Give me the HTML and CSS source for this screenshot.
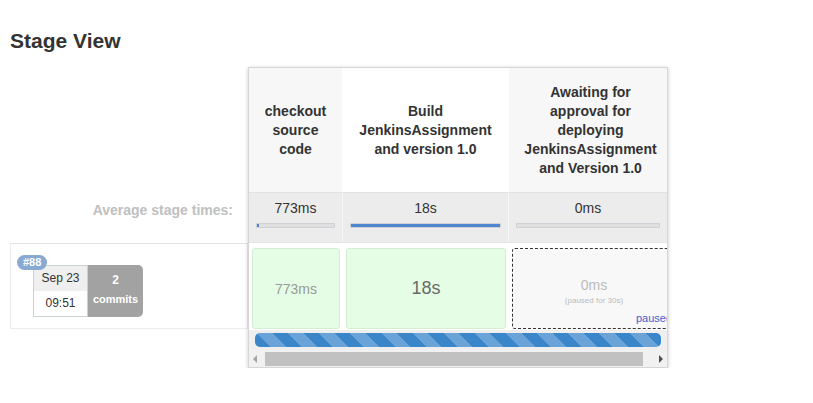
FILE: index.html
```html
<!DOCTYPE html>
<html>
<head>
<meta charset="utf-8">
<link rel="stylesheet" href="styles.css">
</head>
<body>
<div class="page">
  <h2 class="title">Stage View</h2>
  <div class="stage">
    <div class="left">
      <div class="left-head"></div>
      <div class="left-avg">Average stage times:</div>
      <div class="left-build">
        <div class="build-info">
          <span class="badge">#88</span>
          <div class="date">
            <div class="date-day">Sep 23</div>
            <div class="date-time">09:51</div>
          </div>
          <div class="commits">
            <div class="commits-n">2</div>
            <div>commits</div>
          </div>
        </div>
      </div>
    </div>
    <div class="box">
      <div class="scroll">
        <div class="grid">
          <div class="hd alt c1"><span>checkout source code</span></div>
          <div class="hd c2"><span>Build JenkinsAssignment and version 1.0</span></div>
          <div class="hd alt c3"><span>Awaiting for approval for deploying JenkinsAssignment and Version 1.0</span></div>

          <div class="avg c1">
            <div class="avg-t">773ms</div>
            <div class="track"><div class="fill" style="width:3%"></div></div>
          </div>
          <div class="avg c2">
            <div class="avg-t">18s</div>
            <div class="track"><div class="fill" style="width:100%"></div></div>
          </div>
          <div class="avg c3">
            <div class="avg-t">0ms</div>
            <div class="track"><div class="fill" style="width:0%"></div></div>
          </div>

          <div class="cell c1"><div class="ok small">773ms</div></div>
          <div class="cell c2"><div class="ok big">18s</div></div>
          <div class="cell c3">
            <div class="paused">
              <div class="p-time">0ms</div>
              <div class="p-note">(paused for 30s)</div>
              <a class="p-link">paused</a>
            </div>
          </div>
        </div>
        <div class="prog-row"><div class="prog"></div></div>
      </div>
      <div class="sbar">
        <span class="arr arr-l"></span>
        <div class="thumb"></div>
        <span class="arr arr-r"></span>
      </div>
    </div>
  </div>
</div>
</body>
</html>
```
FILE: styles.css
```css
* { box-sizing: border-box; }
body {
  margin: 0;
  font-family: "Liberation Sans", Arial, sans-serif;
  color: #333;
  background: #fff;
}
.page { padding: 29px 10px 0 10px; }
.title {
  margin: 0;
  font-size: 21px;
  line-height: 24px;
  font-weight: bold;
  color: #333;
}
.stage {
  display: flex;
  margin-top: 14px;
}
.left { width: 238px; flex: none; }
.left-head { height: 125px; }
.left-avg {
  height: 50px;
  text-align: right;
  padding: 10px 15px 0 0;
  font-size: 14px;
  font-weight: bold;
  color: #c0c0c0;
}
.left-build {
  height: 86px;
  margin-top: 1px;
  border: 1px solid #ececec;
  border-top-color: #e2e2e2;
}
.build-info {
  position: relative;
  display: flex;
  margin: 21px 0 0 22px;
}
.badge {
  position: absolute;
  left: -16px;
  top: -10px;
  background: #88a9d2;
  color: #fff;
  font-size: 11px;
  font-weight: bold;
  line-height: 15px;
  padding: 0 6px;
  border-radius: 8px;
  z-index: 1;
}
.date {
  width: 55px;
  height: 52px;
  border: 1px solid #c9d3c9;
  font-size: 12px;
  text-align: center;
  color: #333;
}
.date-day { background: #efefef; height: 25px; line-height: 25px; }
.date-time { height: 25px; line-height: 25px; background: #fff; }
.commits {
  width: 55px;
  height: 52px;
  background: #a2a2a2;
  border-radius: 0 5px 5px 0;
  color: #fff;
  font-size: 11px;
  font-weight: bold;
  text-align: center;
  padding-top: 6px;
  line-height: 19px;
}
.commits-n { font-size: 12px; }

.box {
  width: 420px;
  flex: none;
  border: 1px solid #d6d6d6;
  box-shadow: 0 1px 4px rgba(0,0,0,0.22);
  background: #fff;
}
.scroll { overflow: hidden; width: 418px; }
.grid {
  display: grid;
  grid-template-columns: 94px 166px 172px;
  grid-template-rows: 124px 50px 88px;
  width: 432px;
}
.hd {
  display: flex;
  align-items: center;
  justify-content: center;
  text-align: center;
  font-size: 14px;
  font-weight: bold;
  line-height: 19px;
  color: #333;
  padding: 0 6px;
  background: #fff;
  border-right: 1px solid #fdfdfd;
}
.hd.alt { background: #f7f7f7; }
.hd.c3 { padding: 0 14px 0 6px; }
.hd.c1 span { display: block; width: 70px; }
.hd.c3 span { display: block; width: 140px; }
.avg {
  background: #ececec;
  border-top: 1px solid #e2e2e2;
  border-right: 1px solid #f6f6f6;
  padding: 7px 7px 0 7px;
  text-align: center;
}
.avg.c3 { padding-right: 20px; }
.avg-t { font-size: 14px; line-height: 16px; color: #333; }
.track {
  margin-top: 7px;
  height: 5px;
  background: #e0e0e0;
  border: 1px solid #cfcfd6;
  border-radius: 1px;
}
.fill { height: 100%; background: #4f86d0; min-width: 2px; }
.avg.c3 .fill { min-width: 0; }
.cell {
  padding: 5px 3px 2px 3px;
  border-top: 1px solid #e4e4e4;
}
.ok {
  height: 81px;
  background: #e5fde5;
  border: 1px solid #d3ecd3;
  border-radius: 3px;
  display: flex;
  align-items: center;
  justify-content: center;
}
.ok.small { font-size: 14px; color: #9a9a9a; }
.ok.big { font-size: 18px; color: #6a6a6a; }
.paused {
  position: relative;
  height: 81px;
  background: #f8f8f8;
  border: 1px dashed #333;
  border-radius: 3px;
  text-align: center;
  padding-top: 28px;
  width: 164px;
}
.p-time { font-size: 14px; color: #bbb; line-height: 16px; }
.p-note { font-size: 8px; color: #bbb; margin-top: 3px; }
.p-link {
  position: absolute;
  left: 123px;
  bottom: 4px;
  font-size: 11px;
  color: #3e62d0;
}
.prog-row {
  background: #efefef;
  height: 20px;
  padding: 3px 0 0 6px;
  display: flex;
}
.prog {
  width: 406px;
  height: 14px;
  border-radius: 5px;
  background-color: #3b86c9;
  background-image: repeating-linear-gradient(45deg,
    #3b86c9 0, #3b86c9 11px, #6aa3d8 11px, #6aa3d8 22px);
}
.sbar {
  position: relative;
  height: 17px;
  background: #f1f1f1;
  display: flex;
  align-items: center;
  padding: 0 0 0 16px;
}
.thumb {
  width: 378px;
  height: 14px;
  background: #c1c1c1;
}
.arr {
  position: absolute;
  top: 5px;
  width: 0; height: 0;
  border-top: 4px solid transparent;
  border-bottom: 4px solid transparent;
}
.arr-l { left: 4px; border-right: 4px solid #a3a3a3; }
.arr-r { right: 4px; border-left: 4px solid #505050; }
```
